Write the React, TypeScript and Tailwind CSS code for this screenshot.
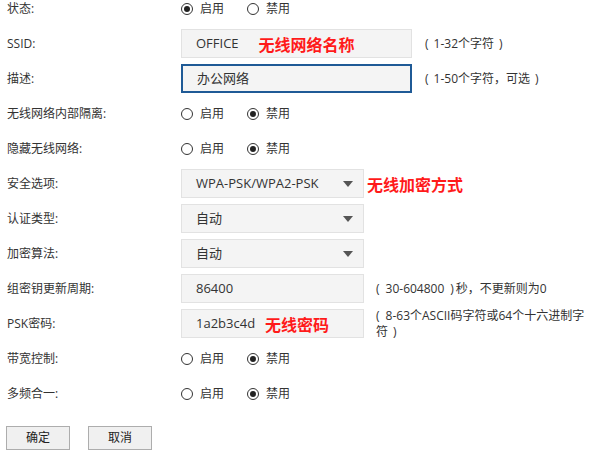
import React from "react";

const font = { fontFamily: '"Open Sans", "Noto Sans CJK SC", sans-serif' };

function Radio({ checked }: { checked: boolean }) {
  return (
    <span className="w-[12px] h-[12px] rounded-full border border-[#333] bg-white flex items-center justify-center shrink-0">
      {checked && <span className="w-[6px] h-[6px] rounded-full bg-[#222]" />}
    </span>
  );
}

function RadioPair({ on }: { on: boolean }) {
  return (
    <div className="flex items-center text-[12px] text-[#333]">
      <div className="flex items-center w-[66px]">
        <Radio checked={on} />
        <span className="ml-[7px]">启用</span>
      </div>
      <div className="flex items-center">
        <Radio checked={!on} />
        <span className="ml-[7px]">禁用</span>
      </div>
    </div>
  );
}

function Row({ label, children }: { label: string; children: React.ReactNode }) {
  return (
    <div className="flex items-center h-[35px]">
      <div className="w-[181px] pl-[7px] text-[12px] text-[#333] shrink-0">{label}</div>
      <div className="flex items-center">{children}</div>
    </div>
  );
}

function Box({ w, text, blue, children }: { w: string; text: string; blue?: boolean; children?: React.ReactNode }) {
  return (
    <div
      className={`${w} h-[29px] flex items-center pl-[14px] bg-[#f4f4f4] text-[13px] text-[#333] ${
        blue ? "border-2 border-[#1f5a96] pl-[13px]" : "border border-[#e2e2e2]"
      }`}
    >
      <span>{text}</span>
      {children}
    </div>
  );
}

function Select({ text }: { text: string }) {
  return (
    <div className="w-[183px] h-[29px] flex items-center justify-between pl-[14px] pr-[10px] bg-[#f4f4f4] border border-[#e2e2e2] text-[13px] text-[#333]">
      <span>{text}</span>
      <svg width="10" height="6" viewBox="0 0 10 6">
        <path d="M0 0 L10 0 L5 6 Z" fill="#555" />
      </svg>
    </div>
  );
}

const Red = ({ children, cls }: { children: React.ReactNode; cls: string }) => (
  <span
    className={`text-[16px] font-bold text-[#ff1a1a] leading-none ${cls}`}
    style={{ fontFamily: '"Noto Sans CJK SC", sans-serif' }}
  >
    {children}
  </span>
);

export default function App() {
  return (
    <div className="w-[604px] h-[454px] bg-white overflow-hidden" style={font}>
      <div className="-mt-[9px]">
        <Row label="状态:">
          <RadioPair on={true} />
        </Row>
        <Row label="SSID:">
          <Box w="w-[231px]" text="OFFICE">
            <Red cls="ml-[20px]">无线网络名称</Red>
          </Box>
          <span className="ml-[13px] text-[12px] text-[#333]">
            (<span className="mx-[5px]">1-32个字符</span>)
          </span>
        </Row>
        <Row label="描述:">
          <Box w="w-[231px]" text="办公网络" blue />
          <span className="ml-[13px] text-[12px] text-[#333]">
            (<span className="mx-[5px]">1-50个字符，可选</span>)
          </span>
        </Row>
        <Row label="无线网络内部隔离:">
          <RadioPair on={false} />
        </Row>
        <Row label="隐藏无线网络:">
          <RadioPair on={false} />
        </Row>
        <Row label="安全选项:">
          <Select text="WPA-PSK/WPA2-PSK" />
          <Red cls="ml-[3px]">无线加密方式</Red>
        </Row>
        <Row label="认证类型:">
          <Select text="自动" />
        </Row>
        <Row label="加密算法:">
          <Select text="自动" />
        </Row>
        <Row label="组密钥更新周期:">
          <Box w="w-[183px]" text="86400" />
          <span className="ml-[12px] text-[12px] text-[#333]">
            (<span className="mx-[6px]">30-604800</span>)<span className="ml-[2px]">秒，不更新则为0</span>
          </span>
        </Row>
        <Row label="PSK密码:">
          <Box w="w-[183px]" text="1a2b3c4d">
            <Red cls="ml-[10px]">无线密码</Red>
          </Box>
          <span className="ml-[12px] text-[12px] leading-[16px] text-[#333]">
            (<span className="ml-[6px]">8-63个ASCII码字符或64个十六进制字</span>
            <br />
            符<span className="ml-[5px]">)</span>
          </span>
        </Row>
        <Row label="带宽控制:">
          <RadioPair on={false} />
        </Row>
        <Row label="多频合一:">
          <RadioPair on={false} />
        </Row>
      </div>
      <div className="flex gap-[18px] pl-[6px] mt-[15px]">
        <button className="w-[64px] h-[24px] border border-[#adadad] bg-[#f0f0f0] text-[12px] text-[#222]">确定</button>
        <button className="w-[64px] h-[24px] border border-[#adadad] bg-[#f0f0f0] text-[12px] text-[#222]">取消</button>
      </div>
    </div>
  );
}
